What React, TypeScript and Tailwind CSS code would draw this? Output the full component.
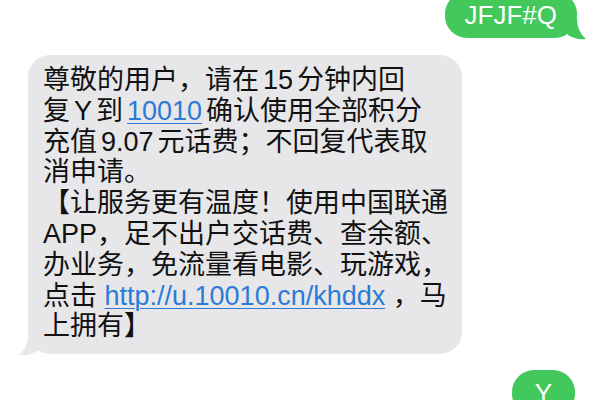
import type { ReactNode } from 'react'

const FONT = '"Liberation Sans", "Noto Sans CJK SC", sans-serif'

function Link({ children, spaced }: { children: ReactNode; spaced?: boolean }) {
  return (
    <span className={`text-[#2b7bd6] underline decoration-1 underline-offset-[3px] ${spaced ? 'mx-[4px]' : ''}`}>
      {children}
    </span>
  )
}

// latin/number runs get a little breathing room between CJK glyphs, like iOS
function Lat({ children }: { children: ReactNode }) {
  return <span className="mx-[4px]">{children}</span>
}

// iOS-style bubble tails
function TailRight({ color }: { color: string }) {
  return (
    <svg className="absolute -right-[10px] bottom-[-2px]" width="20" height="22" viewBox="0 0 20 22">
      <path d="M0 0 H10 C10 9 13 16 19 21 C12 22 6 20 1 17 Z" fill={color} />
    </svg>
  )
}

function TailLeft({ color }: { color: string }) {
  return (
    <svg className="absolute -left-[10px] bottom-[-2px]" width="20" height="22" viewBox="0 0 20 22">
      <path d="M20 0 H10 C10 9 7 16 1 21 C8 22 14 20 19 17 Z" fill={color} />
    </svg>
  )
}

const lines: ReactNode[] = [
  <>尊敬的用户，请在<Lat>15</Lat>分钟内回</>,
  <>复<Lat>Y</Lat>到<Link spaced>10010</Link>确认使用全部积分</>,
  <>充值<Lat>9.07</Lat>元话费；不回复代表取</>,
  '消申请。',
  '【让服务更有温度！使用中国联通',
  'APP，足不出户交话费、查余额、',
  '办业务，免流量看电影、玩游戏，',
  <>点击 <Link>http://u.10010.cn/khddx</Link> ，马</>,
  '上拥有】',
]

export default function App() {
  return (
    <div className="w-[600px] h-[400px] overflow-hidden bg-white flex flex-col" style={{ fontFamily: FONT }}>
      <div className="self-end mr-[23px] -mt-[8px] relative">
        <div className="bg-[#42c85b] rounded-[22px] px-[20px] h-[46px] flex items-center text-white text-[26px] leading-none">
          JFJF#Q
        </div>
        <TailRight color="#42c85b" />
      </div>

      <div className="ml-[28px] mt-[17px] relative w-[434px]">
        <div className="bg-[#e7e7ea] rounded-[22px] pl-[15px] pr-[10px] pt-[10px] pb-[12px] text-[27px] leading-[30.8px] text-[#111] whitespace-nowrap">
          {lines.map((l, i) => (
            <div key={i}>{l}</div>
          ))}
        </div>
        <TailLeft color="#e7e7ea" />
      </div>

      <div className="self-end mr-[25px] mt-[16px] relative">
        <div className="bg-[#42c85b] rounded-[22px] w-[63px] h-[46px] flex items-center justify-center text-white text-[26px] leading-none">
          Y
        </div>
      </div>
    </div>
  )
}
